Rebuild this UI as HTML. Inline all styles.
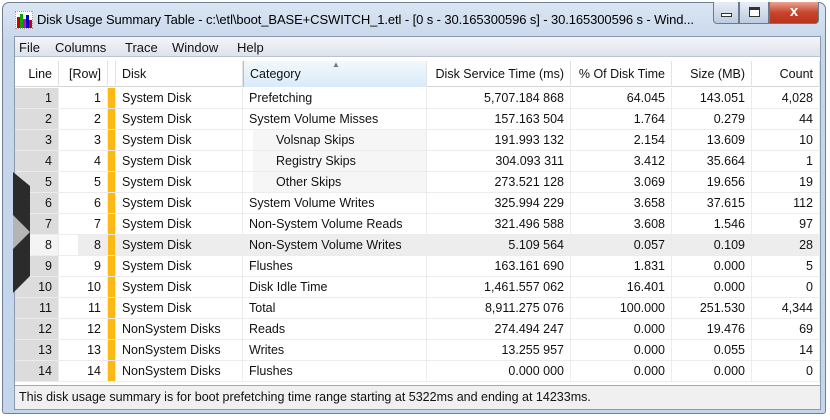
<!DOCTYPE html><html><head><style>
*{margin:0;padding:0;box-sizing:border-box}
body{width:830px;height:420px;background:#fff;font-family:"Liberation Sans",sans-serif;font-size:12.5px;color:#111;position:relative;overflow:hidden}
.win{position:absolute;left:2px;top:2px;width:824px;height:412px;border:1px solid #6f7f94;border-radius:7px 7px 3px 3px;background:linear-gradient(#dbe6f3,#c6d6ea 40px,#c4d6ec);}
.title{position:absolute;left:34px;top:9px;font-size:13px;letter-spacing:-0.1px;color:#000;white-space:nowrap}
.inner{position:absolute;left:11px;top:33px;width:807px;height:374px;background:#fff;border:1px solid #8a99ad}
.menu{position:absolute;left:0;top:0;width:805px;height:20px;background:linear-gradient(#f3f5f9,#dde3ec);border-bottom:1px solid #b9c3d1}
.menu span{position:absolute;top:3px;font-size:13px}
.hdr{position:absolute;left:0;top:24px;height:26px;width:805px;border-bottom:1px solid #d5d5d5;background:#fff}
.hc{position:absolute;top:0;height:26px;line-height:26px;border-right:1px solid #e3e3e3;padding:0 6px}
.row{position:absolute;left:0;width:805px;height:21px;border-bottom:1px solid #ececec}
.c{position:absolute;top:0;height:20px;line-height:20px;padding:0 6px;white-space:nowrap;border-right:1px solid #ececec}
.r{text-align:right}
.status{position:absolute;left:0;top:348px;width:805px;height:24px;background:#f0f0f0;border-top:1px solid #a8a8a8;line-height:23px;padding-left:4px;font-size:12.5px}
.btn{position:absolute;top:-1px;height:22px;border:1px solid #6b7a8f;border-top:none}
</style></head><body>
<div class="win">
<svg style="position:absolute;left:12px;top:8px" width="18" height="18"><rect x="0" y="0" width="18" height="18" fill="#fff" stroke="#333" stroke-dasharray="1 1"/><rect x="2" y="6" width="3" height="11" fill="#c00"/><rect x="5" y="3" width="3" height="14" fill="#0a0"/><rect x="8" y="8" width="3" height="9" fill="#d0c"/><rect x="11" y="4" width="3" height="13" fill="#00c"/><rect x="14" y="9" width="3" height="8" fill="#c00"/></svg>
<div class="title">Disk Usage Summary Table - c:\etl\boot_BASE+CSWITCH_1.etl - [0 s - 30.165300596 s] - 30.165300596 s - Wind...</div>
<div class="btn" style="left:710px;width:26px;border-radius:0 0 0 4px;background:linear-gradient(#e8eef6,#bccbe0)"><div style="position:absolute;left:7px;top:11px;width:11px;height:4px;border:1px solid #333;background:#fff"></div></div>
<div class="btn" style="left:736px;width:30px;background:linear-gradient(#e8eef6,#bccbe0)"><div style="position:absolute;left:9px;top:5px;width:11px;height:10px;border:1px solid #333;border-top-width:3px;background:#fff"></div></div>
<div class="btn" style="left:766px;width:50px;border-radius:0 0 4px 0;background:linear-gradient(#e8a593,#c8452c 50%,#b8331c);color:#fff;text-align:center;font-weight:bold;font-size:15px;line-height:20px">x</div>
<div class="inner">
<div class="menu"><span style="left:4px">File</span><span style="left:40px">Columns</span><span style="left:110px">Trace</span><span style="left:157px">Window</span><span style="left:222px">Help</span></div>
<div class="hdr">
<div class="hc r" style="left:0;width:44px">Line</div>
<div class="hc r" style="left:44px;width:49px">[Row]</div>
<div class="hc" style="left:93px;width:8px;padding:0"></div>
<div class="hc" style="left:101px;width:127px">Disk</div>
<div class="hc" style="left:228px;width:184px;background:linear-gradient(#f2f8fd,#d9ebf9);border-left:1px solid #9fc5e6">Category<span style="position:absolute;left:88px;top:-9px;font-size:8px;color:#777">▲</span></div>
<div class="hc r" style="left:412px;width:144px">Disk Service Time (ms)</div>
<div class="hc r" style="left:556px;width:101px">% Of Disk Time</div>
<div class="hc r" style="left:657px;width:80px">Size (MB)</div>
<div class="hc r" style="left:737px;width:68px">Count</div>
</div>
<div class="row" style="top:51px"><div class="c r" style="left:0;width:44px;background:#dcdcdc">1</div><div class="c r" style="left:44px;width:49px">1</div><div class="c" style="left:93px;width:8px;padding:0;background:#fdb813"></div><div class="c" style="left:101px;width:127px">System Disk</div><div class="c" style="left:228px;width:184px">Prefetching</div><div class="c r" style="left:412px;width:144px">5,707.184 868</div><div class="c r" style="left:556px;width:101px">64.045</div><div class="c r" style="left:657px;width:80px">143.051</div><div class="c r" style="left:737px;width:68px">4,028</div></div>
<div class="row" style="top:72px"><div class="c r" style="left:0;width:44px;background:#dcdcdc">2</div><div class="c r" style="left:44px;width:49px">2</div><div class="c" style="left:93px;width:8px;padding:0;background:#fdb813"></div><div class="c" style="left:101px;width:127px">System Disk</div><div class="c" style="left:228px;width:184px">System Volume Misses</div><div class="c r" style="left:412px;width:144px">157.163 504</div><div class="c r" style="left:556px;width:101px">1.764</div><div class="c r" style="left:657px;width:80px">0.279</div><div class="c r" style="left:737px;width:68px">44</div></div>
<div class="row" style="top:93px"><div class="c r" style="left:0;width:44px;background:#dcdcdc">3</div><div class="c r" style="left:44px;width:49px">3</div><div class="c" style="left:93px;width:8px;padding:0;background:#fdb813"></div><div class="c" style="left:101px;width:127px">System Disk</div><div class="c" style="left:228px;width:184px;background:linear-gradient(90deg,#fff 10px,#f6f6f6 10px);padding-left:33px">Volsnap Skips</div><div class="c r" style="left:412px;width:144px">191.993 132</div><div class="c r" style="left:556px;width:101px">2.154</div><div class="c r" style="left:657px;width:80px">13.609</div><div class="c r" style="left:737px;width:68px">10</div></div>
<div class="row" style="top:114px"><div class="c r" style="left:0;width:44px;background:#dcdcdc">4</div><div class="c r" style="left:44px;width:49px">4</div><div class="c" style="left:93px;width:8px;padding:0;background:#fdb813"></div><div class="c" style="left:101px;width:127px">System Disk</div><div class="c" style="left:228px;width:184px;background:linear-gradient(90deg,#fff 10px,#f6f6f6 10px);padding-left:33px">Registry Skips</div><div class="c r" style="left:412px;width:144px">304.093 311</div><div class="c r" style="left:556px;width:101px">3.412</div><div class="c r" style="left:657px;width:80px">35.664</div><div class="c r" style="left:737px;width:68px">1</div></div>
<div class="row" style="top:135px"><div class="c r" style="left:0;width:44px;background:#dcdcdc">5</div><div class="c r" style="left:44px;width:49px">5</div><div class="c" style="left:93px;width:8px;padding:0;background:#fdb813"></div><div class="c" style="left:101px;width:127px">System Disk</div><div class="c" style="left:228px;width:184px;background:linear-gradient(90deg,#fff 10px,#f6f6f6 10px);padding-left:33px">Other Skips</div><div class="c r" style="left:412px;width:144px">273.521 128</div><div class="c r" style="left:556px;width:101px">3.069</div><div class="c r" style="left:657px;width:80px">19.656</div><div class="c r" style="left:737px;width:68px">19</div></div>
<div class="row" style="top:156px"><div class="c r" style="left:0;width:44px;background:#dcdcdc">6</div><div class="c r" style="left:44px;width:49px">6</div><div class="c" style="left:93px;width:8px;padding:0;background:#fdb813"></div><div class="c" style="left:101px;width:127px">System Disk</div><div class="c" style="left:228px;width:184px">System Volume Writes</div><div class="c r" style="left:412px;width:144px">325.994 229</div><div class="c r" style="left:556px;width:101px">3.658</div><div class="c r" style="left:657px;width:80px">37.615</div><div class="c r" style="left:737px;width:68px">112</div></div>
<div class="row" style="top:177px"><div class="c r" style="left:0;width:44px;background:#dcdcdc">7</div><div class="c r" style="left:44px;width:49px">7</div><div class="c" style="left:93px;width:8px;padding:0;background:#fdb813"></div><div class="c" style="left:101px;width:127px">System Disk</div><div class="c" style="left:228px;width:184px">Non-System Volume Reads</div><div class="c r" style="left:412px;width:144px">321.496 588</div><div class="c r" style="left:556px;width:101px">3.608</div><div class="c r" style="left:657px;width:80px">1.546</div><div class="c r" style="left:737px;width:68px">97</div></div>
<div class="row" style="top:198px;background:#ededed"><div class="c r" style="left:0;width:44px;background:#f4f4f4">8</div><div class="c r" style="left:44px;width:49px;background:linear-gradient(90deg,#fff 19px,#ededed 19px)">8</div><div class="c" style="left:93px;width:8px;padding:0;background:#fdb813"></div><div class="c" style="left:101px;width:127px">System Disk</div><div class="c" style="left:228px;width:184px">Non-System Volume Writes</div><div class="c r" style="left:412px;width:144px">5.109 564</div><div class="c r" style="left:556px;width:101px">0.057</div><div class="c r" style="left:657px;width:80px">0.109</div><div class="c r" style="left:737px;width:68px">28</div></div>
<div class="row" style="top:219px"><div class="c r" style="left:0;width:44px;background:#dcdcdc">9</div><div class="c r" style="left:44px;width:49px">9</div><div class="c" style="left:93px;width:8px;padding:0;background:#fdb813"></div><div class="c" style="left:101px;width:127px">System Disk</div><div class="c" style="left:228px;width:184px">Flushes</div><div class="c r" style="left:412px;width:144px">163.161 690</div><div class="c r" style="left:556px;width:101px">1.831</div><div class="c r" style="left:657px;width:80px">0.000</div><div class="c r" style="left:737px;width:68px">5</div></div>
<div class="row" style="top:240px"><div class="c r" style="left:0;width:44px;background:#dcdcdc">10</div><div class="c r" style="left:44px;width:49px">10</div><div class="c" style="left:93px;width:8px;padding:0;background:#fdb813"></div><div class="c" style="left:101px;width:127px">System Disk</div><div class="c" style="left:228px;width:184px">Disk Idle Time</div><div class="c r" style="left:412px;width:144px">1,461.557 062</div><div class="c r" style="left:556px;width:101px">16.401</div><div class="c r" style="left:657px;width:80px">0.000</div><div class="c r" style="left:737px;width:68px">0</div></div>
<div class="row" style="top:261px"><div class="c r" style="left:0;width:44px;background:#dcdcdc">11</div><div class="c r" style="left:44px;width:49px">11</div><div class="c" style="left:93px;width:8px;padding:0;background:#fdb813"></div><div class="c" style="left:101px;width:127px">System Disk</div><div class="c" style="left:228px;width:184px">Total</div><div class="c r" style="left:412px;width:144px">8,911.275 076</div><div class="c r" style="left:556px;width:101px">100.000</div><div class="c r" style="left:657px;width:80px">251.530</div><div class="c r" style="left:737px;width:68px">4,344</div></div>
<div class="row" style="top:282px"><div class="c r" style="left:0;width:44px;background:#dcdcdc">12</div><div class="c r" style="left:44px;width:49px">12</div><div class="c" style="left:93px;width:8px;padding:0;background:#fdb813"></div><div class="c" style="left:101px;width:127px">NonSystem Disks</div><div class="c" style="left:228px;width:184px">Reads</div><div class="c r" style="left:412px;width:144px">274.494 247</div><div class="c r" style="left:556px;width:101px">0.000</div><div class="c r" style="left:657px;width:80px">19.476</div><div class="c r" style="left:737px;width:68px">69</div></div>
<div class="row" style="top:303px"><div class="c r" style="left:0;width:44px;background:#dcdcdc">13</div><div class="c r" style="left:44px;width:49px">13</div><div class="c" style="left:93px;width:8px;padding:0;background:#fdb813"></div><div class="c" style="left:101px;width:127px">NonSystem Disks</div><div class="c" style="left:228px;width:184px">Writes</div><div class="c r" style="left:412px;width:144px">13.255 957</div><div class="c r" style="left:556px;width:101px">0.000</div><div class="c r" style="left:657px;width:80px">0.055</div><div class="c r" style="left:737px;width:68px">14</div></div>
<div class="row" style="top:324px"><div class="c r" style="left:0;width:44px;background:#dcdcdc">14</div><div class="c r" style="left:44px;width:49px">14</div><div class="c" style="left:93px;width:8px;padding:0;background:#fdb813"></div><div class="c" style="left:101px;width:127px">NonSystem Disks</div><div class="c" style="left:228px;width:184px">Flushes</div><div class="c r" style="left:412px;width:144px">0.000 000</div><div class="c r" style="left:556px;width:101px">0.000</div><div class="c r" style="left:657px;width:80px">0.000</div><div class="c r" style="left:737px;width:68px">0</div></div>
<div class="status">This disk usage summary is for boot prefetching time range starting at 5322ms and ending at 14233ms.</div>
</div>
</div>
<svg style="position:absolute;left:0;top:0" width="40" height="420"><polygon points="13,172 30,186 30,276 13,293" fill="#2b2b2b"/><polygon points="13,215 30,232 13,249" fill="#b4b4b4"/></svg>
</body></html>
